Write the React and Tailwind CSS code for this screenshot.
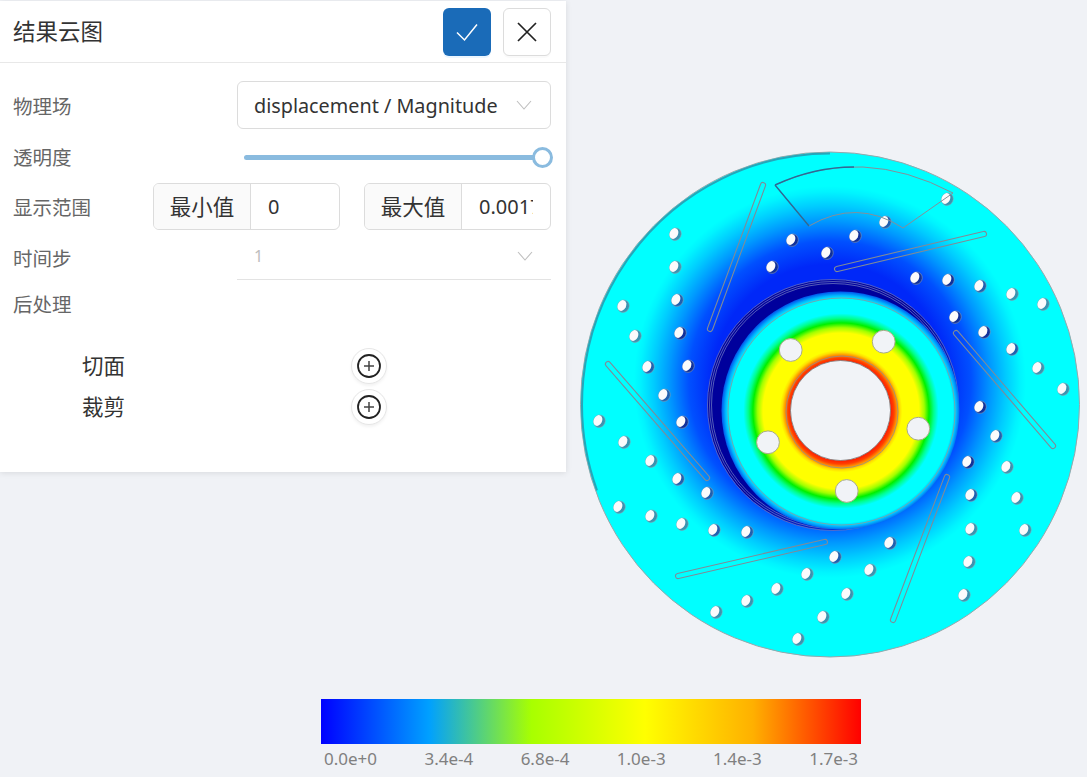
const FONT = 'font-["Noto_Sans","Noto_Sans_CJK_SC",sans-serif]';

const HOLES = [
  [675,234],[675,267],[677,300],[680,333],[688,366],[623,306],[635,336],[648,367],[664,395],
  [792,240],[827,253],[772,267],[947,199],[885,222],[855,236],[916,278],[948,280],[980,286],
  [1012,294],[1043,304],[955,317],[984,332],[1012,349],[1038,368],[1063,389],[599,421],[624,442],
  [651,461],[678,479],[707,493],[682,422],[619,507],[651,516],[682,524],[714,530],[747,532],
  [716,612],[747,601],[777,589],[807,574],[823,617],[798,639],[980,407],[996,436],[968,462],
  [1007,467],[971,495],[1017,498],[971,529],[1025,530],[969,562],[964,595],[890,543],[870,570],
  [847,594],[835,557],
];
const SLOTS = [
  [[763,185],[710,329]],[[984,234],[837,269]],[[956,333],[1053,446]],
  [[947,477],[893,620]],[[825,542],[678,576]],[[608,364],[707,478]],
];
const BOLTS = [[790.7,350],[883.7,341.7],[918.3,428.7],[846.7,491],[768,442.3]];

function Disc() {
  return (
    <svg viewBox="575 145 512 520" className="block w-[512px] h-[520px] mt-[145px] ml-[9px] self-start">
      <defs>
        <radialGradient id="field" gradientUnits="userSpaceOnUse" cx="830" cy="382" r="196">
          <stop offset="0.6" stopColor="#0028f8" />
          <stop offset="0.72" stopColor="#0050ff" />
          <stop offset="0.82" stopColor="#0098ff" />
          <stop offset="0.9" stopColor="#00ccff" />
          <stop offset="0.97" stopColor="#00f4ff" />
          <stop offset="1" stopColor="#00ffff" />
        </radialGradient>
        <radialGradient id="hub" gradientUnits="userSpaceOnUse" cx="841" cy="411" r="119">
          <stop offset="0.42" stopColor="#ff2000" />
          <stop offset="0.445" stopColor="#ff4000" />
          <stop offset="0.47" stopColor="#ff9000" />
          <stop offset="0.495" stopColor="#ffe000" />
          <stop offset="0.515" stopColor="#ffff00" />
          <stop offset="0.655" stopColor="#ffff00" />
          <stop offset="0.7" stopColor="#a0ff00" />
          <stop offset="0.74" stopColor="#00f000" />
          <stop offset="0.78" stopColor="#00ff90" />
          <stop offset="0.82" stopColor="#00ffff" />
          <stop offset="0.94" stopColor="#00ffff" />
          <stop offset="0.97" stopColor="#00b8ff" />
          <stop offset="1" stopColor="#0060f0" />
        </radialGradient>
        <linearGradient id="crescent" gradientUnits="userSpaceOnUse" x1="715" y1="340" x2="880" y2="500">
          <stop offset="0" stopColor="#00009c" />
          <stop offset="0.55" stopColor="#00009c" />
          <stop offset="1" stopColor="#0030e0" />
        </linearGradient>
      </defs>
      <ellipse cx="830" cy="404.5" rx="249.5" ry="252.5" fill="url(#field)" stroke="#9aa6aa" strokeWidth="1" />
      <path d="M597 490.3 A 248 251 0 0 1 830 153.5" fill="none" stroke="#2a97ae" strokeWidth="2" opacity="0.85" />
      {SLOTS.map(([a, b], i) => {
        const dx = b[0] - a[0], dy = b[1] - a[1];
        const len = Math.hypot(dx, dy) + 5;
        const ang = (Math.atan2(dy, dx) * 180) / Math.PI;
        const mx = (a[0] + b[0]) / 2, my = (a[1] + b[1]) / 2;
        return (
          <rect key={i} x={-len / 2} y={-2.6} width={len} height={5.2} rx={2.6}
            transform={`translate(${mx} ${my}) rotate(${ang})`}
            fill="none" stroke="#7f8b98" strokeWidth="1.1" />
        );
      })}
      {HOLES.map(([x, y], i) => {
        const d = Math.hypot(x - 830, y - 382);
        const shadow = d < 165 ? "#10309a" : d < 190 ? "#1f60b0" : "#3a93b0";
        return (
          <g key={i} transform={`rotate(25 ${x} ${y})`}>
            <ellipse cx={x + 0.4} cy={y} rx="5.8" ry="6.3" fill={shadow} stroke="#93a0ad" strokeWidth="0.5" />
            <ellipse cx={x - 1.2} cy={y} rx="4.2" ry="5.6" fill="#fbfbfc" />
          </g>
        );
      })}
      <path d="M775 185 Q 862 145 953 193 L 903 228 Q 857 198 809 226 Z" fill="none" stroke="#858f99" strokeWidth="1" />
      <path d="M775 185 Q 814 167 854 167 M775 185 L 809 226" fill="none" stroke="#2c6a96" strokeWidth="1.4" />
      <circle cx="833" cy="405" r="125.5" fill="url(#crescent)" />
      {[125.5, 123.5, 121.5].map((r) => (
        <circle key={r} cx="833" cy="405" r={r} fill="none" stroke="#6a74c0" strokeWidth="0.8" />
      ))}
      <circle cx="840.5" cy="410.5" r="119" fill="url(#hub)" />
      <circle cx="841.5" cy="411.5" r="113.5" fill="none" stroke="#70a8b0" strokeWidth="1" />
      <circle cx="842" cy="412" r="56" fill="none" stroke="#8f8f8f" strokeWidth="1" opacity="0.8" />
      <circle cx="840.5" cy="410.5" r="50" fill="#f1f3f7" stroke="#777" strokeWidth="0.8" />
      {BOLTS.map(([x, y], i) => (
        <circle key={i} cx={x} cy={y} r="11.4" fill="#f1f3f7" stroke="#a8ac88" strokeWidth="1" />
      ))}
    </svg>
  );
}

function Chevron({ className }) {
  return (
    <svg width="16" height="10" viewBox="0 0 16 10" className={className} fill="none" stroke="#bfbfbf" strokeWidth="1.1">
      <path d="M1 1 L8 9 L15 1" />
    </svg>
  );
}

function Label({ children, className = "" }) {
  return <span className={`text-[19.5px] leading-none text-[#666] ${className}`}>{children}</span>;
}

function RangeInput({ addon, value }) {
  return (
    <div className="flex w-[187px] h-[47px] rounded-md border border-[#dcdcdc] overflow-hidden text-[#333]">
      <div className="w-[97px] shrink-0 flex items-center justify-center pt-[1px] bg-[#fafafa] border-r border-[#dcdcdc] text-[21.5px]">{addon}</div>
      <div className="flex-1 min-w-0 flex items-center pl-[17px] pr-[17px] overflow-hidden text-[20px]">
        <span className="block overflow-hidden whitespace-nowrap">{value}</span>
      </div>
    </div>
  );
}

function PostRow({ name }) {
  return (
    <div className="flex items-center h-[41px]">
      <span className="w-[338px] pl-[69px] text-[21.5px] leading-none text-[#333]">{name}</span>
      <button className="w-[36px] h-[36px] rounded-full bg-white border border-[#e6e6e6] shadow-[0_2px_3px_rgba(0,0,0,0.05)] flex items-center justify-center">
        <svg width="26" height="26" viewBox="0 0 26 26" fill="none" stroke="#222" >
          <circle cx="13" cy="13" r="11" strokeWidth="1.8" />
          <path d="M13 8 V18 M8 13 H18" strokeWidth="1.5" stroke="#444" />
        </svg>
      </button>
    </div>
  );
}

function Panel() {
  return (
    <div className="w-[566px] h-[471px] mt-[1px] bg-white shrink-0 self-start shadow-[0_1px_6px_rgba(0,0,0,0.10)] flex flex-col">
      <div className="h-[62px] shrink-0 border-b border-[#e8e8e8] flex items-center pl-[13px] pr-[15px]">
        <span className="pt-[2px] text-[22.5px] leading-none text-[#333] flex-1">结果云图</span>
        <button className="w-[48px] h-[48px] rounded-md bg-[#1a6bb8] shadow-[0_2px_0_rgba(5,145,255,0.08)] flex items-center justify-center">
          <svg width="24" height="24" viewBox="0 0 24 24" fill="none" stroke="#fff" strokeWidth="1.5">
            <path d="M2 12.5 L9.5 20 L22 4.5" />
          </svg>
        </button>
        <button className="w-[48px] h-[48px] ml-[12px] rounded-md bg-white border border-[#dcdcdc] shadow-[0_2px_0_rgba(0,0,0,0.02)] flex items-center justify-center">
          <svg width="22" height="22" viewBox="0 0 22 22" fill="none" stroke="#222" strokeWidth="1.7">
            <path d="M2 2 L20 20 M20 2 L2 20" />
          </svg>
        </button>
      </div>
      <div className="flex flex-col pl-[13px] pr-[15px] pt-[18px]">
        <div className="flex items-center justify-between h-[48px]">
          <Label className="pt-[4px]">物理场</Label>
          <div className="w-[314px] h-[48px] rounded-md border border-[#dcdcdc] flex items-center pl-[16px] pr-[18px] justify-between text-[19.8px] text-[#333]">
            <span className="whitespace-nowrap pt-[2px]">displacement / Magnitude</span>
            <Chevron />
          </div>
        </div>
        <div className="flex items-center justify-between h-[54px] pt-[3px]">
          <Label>透明度</Label>
          <div className="relative w-[299px] mr-[8px] h-[5px] rounded-full bg-[#8abbdf]">
            <span className="absolute right-[-10px] top-[-8px] w-[21px] h-[21px] rounded-full bg-white border-[3px] border-[#8abbdf]" />
          </div>
        </div>
        <div className="flex items-center h-[47px]">
          <Label className="w-[140px] pt-[2px]">显示范围</Label>
          <RangeInput addon="最小值" value="0" />
          <div className="w-[24px]" />
          <RangeInput addon="最大值" value="0.0017" />
        </div>
        <div className="flex items-center justify-between h-[50px]">
          <Label className="pt-[7px]">时间步</Label>
          <div className="w-[314px] h-[50px] border-b border-[#e3e3e3] flex items-center justify-between pt-[3px] pl-[17px] pr-[18px] text-[16px] text-[#bdbdbd]">
            <span>1</span>
            <Chevron />
          </div>
        </div>
        <div className="flex items-center h-[46px]">
          <Label className="pt-[4px]">后处理</Label>
        </div>
      </div>
      <div className="flex flex-col pl-[13px] mt-[19px]">
        <PostRow name="切面" />
        <PostRow name="裁剪" />
      </div>
    </div>
  );
}

function ColorBar() {
  const labels = ["0.0e+0", "3.4e-4", "6.8e-4", "1.0e-3", "1.4e-3", "1.7e-3"];
  return (
    <div className="w-[540px] ml-[321px]">
      <div className="h-[45px] bg-[linear-gradient(to_right,#0000ff_0%,#00a0ff_20%,#a8ff00_39%,#ffff00_60%,#ffb000_80%,#ff0000_100%)]" />
      <div className="flex justify-between pl-[3px] pr-[3px] mt-[6px] text-[17px] leading-[18px] text-[#808080]">
        {labels.map((l) => <span key={l}>{l}</span>)}
      </div>
    </div>
  );
}

export default function App() {
  return (
    <div className={`w-[1087px] h-[777px] overflow-hidden bg-[#f0f2f6] ${FONT}`}>
      <div className="flex h-[699px]">
        <Panel />
        <Disc />
      </div>
      <ColorBar />
    </div>
  );
}
